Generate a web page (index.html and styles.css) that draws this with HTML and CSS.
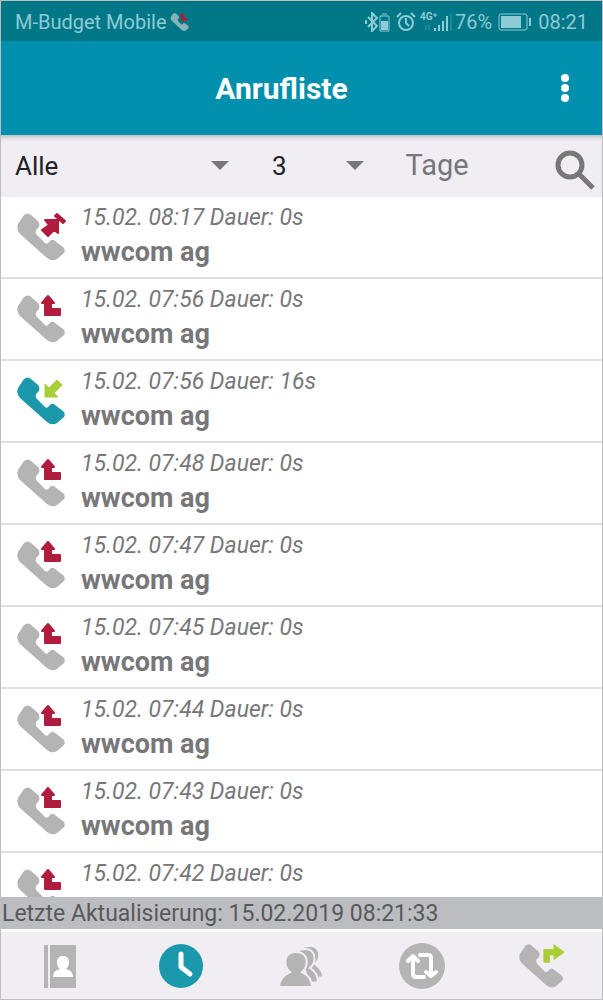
FILE: index.html
```
<!DOCTYPE html>
<html lang="de">
<head>
    <meta charset="UTF-8">
    <meta name="viewport" content="width=device-width, initial-scale=1.0">
    <title>Anrufliste</title>
    <link rel="stylesheet" href="styles.css">
</head>
<body>
    <svg class="sprite" aria-hidden="true">
        <symbol id="handset" viewBox="0 0 52 52">
            <path d="M8 4Q12 1 15 4L22 10Q24 12 23 16L20 19Q19 22 21 24L29 32Q31 34 33 31Q36 27 39 30L47 36Q50 39 48 42L41 48Q36 51 31 47L4 23Q0 18 2 13Z"/>
        </symbol>
        <symbol id="arrow-missed" viewBox="0 0 52 52">
            <path d="M29 9H42V22L38 19L32 25L26 19L33 14ZM41 3L49 10L47 12L39 5Z"/>
        </symbol>
        <symbol id="arrow-out" viewBox="0 0 52 52">
            <path d="M32 3L38 10H35V16H44V22H29V10H26Z"/>
        </symbol>
        <symbol id="arrow-in" viewBox="0 0 52 52">
            <path d="M29 22V9L33 13L41 5L46 10L38 18L42 22Z"/>
        </symbol>
    </svg>

    <div class="status-bar">
        <span>M-Budget Mobile</span>
        <svg class="status-call" viewBox="0 0 52 52"><use href="#handset"/><use class="red" href="#arrow-out"/></svg>
        <div class="status-right">
            <svg width="26" height="20" viewBox="0 0 26 20">
                <path d="M3 5L12 14L7 19V1L12 6L3 15M1 8V12" fill="none" stroke="currentColor" stroke-width="2"/>
                <path d="M15 4H24V19H15ZM17 2H22" fill="none" stroke="currentColor"/>
                <path d="M16 9H23V18H16Z" fill="currentColor"/>
            </svg>
            <svg class="alarm" width="20" height="20" viewBox="0 0 20 20" fill="none" stroke="currentColor" stroke-width="2">
                <circle cx="10" cy="11" r="7"/>
                <path d="M10 6V11L13 14M1 5L5 1M15 1L19 5"/>
            </svg>
            <svg class="signal" width="33" height="20" viewBox="0 0 33 20">
                <text x="0" y="8">4G</text>
                <path d="M13 3h4M15 1v4" stroke="currentColor"/>
                <path d="M14 16h2v3h-2zM18 13h2v6h-2zM22 9h2v10h-2zM26 4h2v15h-2z" fill="currentColor"/>
                <path d="M6 13v5M9 13v5M31 2v17" stroke="currentColor" opacity=".4"/>
            </svg>
            <span>76%</span>
            <svg class="battery" width="34" height="18" viewBox="0 0 34 18">
                <rect x="1" y="1" width="28" height="16" rx="2" fill="none" stroke="currentColor"/>
                <path d="M3 3H23V15H3ZM31 5H33V13H31Z" fill="currentColor"/>
            </svg>
            <span>08:21</span>
        </div>
    </div>

    <header class="header">
        <h1>Anrufliste</h1>
        <button class="menu-btn" aria-label="Menü">
            <svg width="8" height="28" viewBox="0 0 8 28" fill="#fff"><circle cx="4" cy="4" r="4"/><circle cx="4" cy="14" r="4"/><circle cx="4" cy="24" r="4"/></svg>
        </button>
    </header>

    <form class="filter">
        <div class="drop">
            <select aria-label="Anrufart">
                <option>Alle</option>
                <option>Verpasst</option>
            </select>
        </div>
        <div class="drop">
            <select id="days">
                <option>3</option>
                <option>7</option>
            </select>
        </div>
        <label for="days">Tage</label>
        <button type="button" class="search-btn" aria-label="Suchen">
            <svg width="40" height="40" viewBox="0 0 40 40" fill="none" stroke="#77777a" stroke-width="5">
                <circle cx="15" cy="15" r="12"/>
                <path d="M24 24L38 38"/>
            </svg>
        </button>
    </form>

    <ul class="calls">
        <li>
            <svg class="call-icon" viewBox="0 0 52 52"><use href="#handset"/><use class="red" href="#arrow-missed"/></svg>
            <div><p class="when">15.02. 08:17 Dauer: 0s</p><p class="who">wwcom ag</p></div>
        </li>
        <li>
            <svg class="call-icon" viewBox="0 0 52 52"><use href="#handset"/><use class="red" href="#arrow-out"/></svg>
            <div><p class="when">15.02. 07:56 Dauer: 0s</p><p class="who">wwcom ag</p></div>
        </li>
        <li>
            <svg class="call-icon answered" viewBox="0 0 52 52"><use href="#handset"/><use class="green" href="#arrow-in"/></svg>
            <div><p class="when">15.02. 07:56 Dauer: 16s</p><p class="who">wwcom ag</p></div>
        </li>
        <li>
            <svg class="call-icon" viewBox="0 0 52 52"><use href="#handset"/><use class="red" href="#arrow-out"/></svg>
            <div><p class="when">15.02. 07:48 Dauer: 0s</p><p class="who">wwcom ag</p></div>
        </li>
        <li>
            <svg class="call-icon" viewBox="0 0 52 52"><use href="#handset"/><use class="red" href="#arrow-out"/></svg>
            <div><p class="when">15.02. 07:47 Dauer: 0s</p><p class="who">wwcom ag</p></div>
        </li>
        <li>
            <svg class="call-icon" viewBox="0 0 52 52"><use href="#handset"/><use class="red" href="#arrow-out"/></svg>
            <div><p class="when">15.02. 07:45 Dauer: 0s</p><p class="who">wwcom ag</p></div>
        </li>
        <li>
            <svg class="call-icon" viewBox="0 0 52 52"><use href="#handset"/><use class="red" href="#arrow-out"/></svg>
            <div><p class="when">15.02. 07:44 Dauer: 0s</p><p class="who">wwcom ag</p></div>
        </li>
        <li>
            <svg class="call-icon" viewBox="0 0 52 52"><use href="#handset"/><use class="red" href="#arrow-out"/></svg>
            <div><p class="when">15.02. 07:43 Dauer: 0s</p><p class="who">wwcom ag</p></div>
        </li>
        <li>
            <svg class="call-icon" viewBox="0 0 52 52"><use href="#handset"/><use class="red" href="#arrow-out"/></svg>
            <div><p class="when">15.02. 07:42 Dauer: 0s</p></div>
        </li>
    </ul>

    <p class="updated">Letzte Aktualisierung: 15.02.2019 08:21:33</p>

    <nav class="tabs">
        <button aria-label="Kontakte">
            <svg viewBox="0 0 52 52">
                <path d="M10 5h3v43h-3q-1 0-1-1V6q0-1 1-1zM15 5h25q1 0 1 1v41q0 1-1 1H15z"/>
                <path fill="#fff" d="M28 16c8 0 7 10 3 13c4 1 7 3 7 8H18c0-5 3-7 7-8c-4-3-5-13 3-13z"/>
            </svg>
        </button>
        <button class="active" aria-label="Anrufliste">
            <svg viewBox="0 0 52 52">
                <circle cx="26" cy="26" r="22"/>
                <path d="M26 14V27L35 34" fill="none" stroke="#fff" stroke-width="5" stroke-linecap="round" stroke-linejoin="round"/>
            </svg>
        </button>
        <button aria-label="Gruppen">
            <svg viewBox="0 0 52 52">
                <g stroke="#f0eef3" stroke-width="2">
                    <path d="M35 6c10 0 12 12 5 18c4 3 8 7 8 13l-9 2l-12-31q2-2 8-2z"/>
                    <path d="M30 9c11 0 12 13 5 19c5 3 8 7 8 14l-8 1l-13-31q2-3 8-3z"/>
                    <path d="M21 12c13 0 13 14 6 20c6 3 10 7 10 15H4c0-8 5-12 11-15c-7-6-7-20 6-20z"/>
                </g>
            </svg>
        </button>
        <button aria-label="Umleitung">
            <svg viewBox="0 0 52 52">
                <circle cx="26" cy="26" r="23"/>
                <g fill="none" stroke="#fff" stroke-width="4" stroke-linecap="round" stroke-linejoin="round">
                    <path d="M28 37H20Q17 37 17 34V18M12 21L17 16L22 21"/>
                    <path d="M24 15H32Q35 15 35 18V34M30 32L35 36L40 32"/>
                </g>
            </svg>
        </button>
        <button class="dial" aria-label="Anrufen">
            <svg viewBox="0 0 52 52"><use href="#handset"/><path class="green" d="M28 22V8H39V3L50 11L39 19V14H34V22Z"/></svg>
        </button>
    </nav>
</body>
</html>
```
FILE: styles.css
```
* {
    box-sizing: border-box;
}

body {
    display: flex;
    flex-direction: column;
    height: 100vh;
    margin: 0;
    border: 1px solid #bcbec2;
    background-color: #fff;
    color: #77777a;
    font-family: Roboto, sans-serif;
    font-size: 23px;
}

p, h1, ul {
    margin: 0;
    padding: 0;
}

button {
    padding: 0;
    border: none;
    background: none;
    cursor: pointer;
}

svg {
    display: block;
}

.sprite {
    position: absolute;
    width: 0;
    height: 0;
}

.red {
    fill: #b01c3e;
    stroke: #b01c3e;
    stroke-width: 2;
    stroke-linejoin: round;
}

.green {
    fill: #a8cf38;
    stroke: #a8cf38;
    stroke-linejoin: round;
}

.status-bar {
    display: flex;
    flex: none;
    align-items: center;
    height: 40px;
    padding: 2px 14px 0;
    background-color: #007786;
    color: #8dcbd6;
    font-size: 20px;
}

.status-call {
    width: 20px;
    height: 20px;
    margin-left: 3px;
    fill: #86b3b5;
}

.status-right {
    display: flex;
    align-items: center;
    margin-left: auto;
}

.alarm {
    margin: 0 4px 0 5px;
}

.signal {
    margin-right: 2px;
}

.signal text {
    fill: currentColor;
    font-size: 10px;
    font-weight: bold;
}

.battery {
    margin: 0 6px;
}

.header {
    display: grid;
    grid-template-columns: 1fr 40px;
    flex: none;
    align-items: center;
    height: 94px;
    padding: 0 17px;
    background-color: #0090ad;
    color: #fff;
}

.header h1 {
    font-size: 30px;
    text-align: center;
}

.menu-btn {
    display: grid;
    place-items: center;
    height: 48px;
}

.filter {
    display: grid;
    grid-template-columns: 216fr 95fr 109fr 40px;
    column-gap: 40px;
    flex: none;
    align-items: center;
    height: 62px;
    padding: 0 7px 0 12px;
    background-color: #f0eef3;
    box-shadow: inset 0 5px 4px -3px #b9b7bc;
    font-size: 29px;
    line-height: 32px;
}

.filter label {
    padding-bottom: 2px;
}

.drop {
    position: relative;
}

.drop::after {
    content: "";
    position: absolute;
    top: 11px;
    right: 1px;
    border: 9px solid transparent;
    border-top-color: #77777a;
    border-bottom: none;
    pointer-events: none;
}

select {
    display: block;
    width: 100%;
    padding: 0 2px;
    border: none;
    appearance: none;
    background: none;
    color: #212124;
    font: inherit;
    font-size: 26px;
}

.search-btn {
    padding-top: 8px;
}

.calls {
    flex: 1;
    min-height: 0;
    overflow: hidden;
    list-style: none;
}

.calls li {
    display: flex;
    gap: 13px;
    height: 82px;
    padding: 7px 16px 0 15px;
    border-bottom: 2px solid #dfdfe1;
}

.call-icon {
    width: 52px;
    height: 52px;
    margin-top: 7px;
    fill: #b4b4b5;
}

.answered {
    fill: #1b98ac;
}

.when {
    font-style: italic;
    line-height: 28px;
}

.who {
    font-size: 27px;
    font-weight: bold;
    line-height: 40px;
}

.updated {
    flex: none;
    padding: 2px 1px 0;
    background-color: #bbbdc0;
    color: #58595c;
    line-height: 30px;
}

.tabs {
    display: grid;
    grid-template-columns: repeat(5, 1fr);
    flex: none;
    height: 70px;
    border-top: 3px solid #fff;
    background-color: #f0eef3;
}

.tabs button {
    display: grid;
    place-items: center;
}

.tabs svg {
    width: 52px;
    height: 52px;
    fill: #b4b4b5;
}

.tabs .active svg {
    fill: #1b98ac;
}

.tabs .dial svg {
    width: 48px;
    height: 48px;
}
```
